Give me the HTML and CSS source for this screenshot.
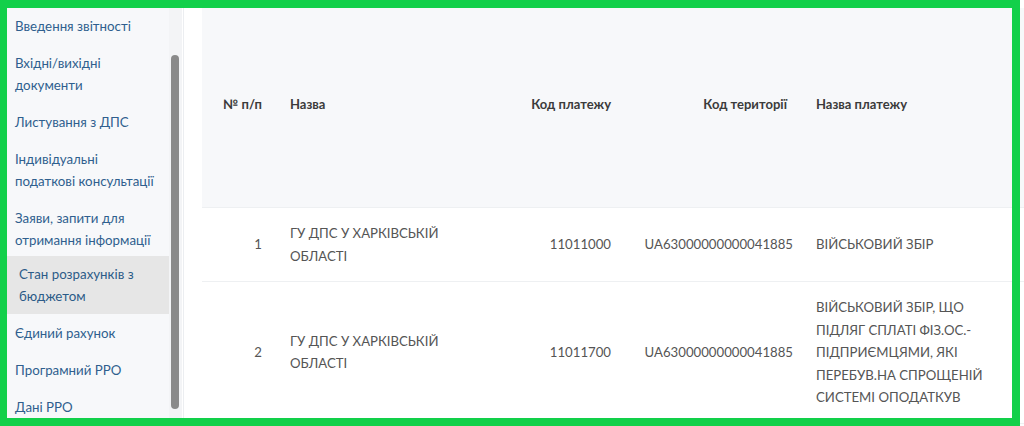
FILE: index.html
```html
<!DOCTYPE html>
<html>
  <head>
    <meta charset="utf-8">
    <title>Стан розрахунків з бюджетом</title>
    <link rel="stylesheet" href="styles.css">
  </head>
  <body>
    <div class="page">
      <aside class="sidebar">
        <nav class="menu">
          <a class="menu-item" href="#">Введення звітності</a>
          <a class="menu-item" href="#">Вхідні/вихідні документи</a>
          <a class="menu-item" href="#">Листування з ДПС</a>
          <a class="menu-item" href="#">Індивідуальні податкові консультації</a>
          <a class="menu-item" href="#">Заяви, запити для отримання інформації</a>
          <a class="menu-item active" href="#">Стан розрахунків з бюджетом</a>
          <a class="menu-item" href="#">Єдиний рахунок</a>
          <a class="menu-item" href="#">Програмний РРО</a>
          <a class="menu-item" href="#">Дані РРО</a>
        </nav>
        <div class="scroll-track">
          <div class="scroll-thumb"></div>
        </div>
      </aside>
      <main class="content">
        <table class="grid">
          <colgroup>
            <col class="c-num">
            <col class="c-name">
            <col class="c-code">
            <col class="c-terr">
            <col class="c-pay">
            <col>
          </colgroup>
          <thead>
            <tr>
              <th class="num">№ п/п</th>
              <th>Назва</th>
              <th class="num">Код платежу</th>
              <th class="num terr">Код території</th>
              <th class="pay">Назва платежу</th>
              <th></th>
            </tr>
          </thead>
          <tbody>
            <tr>
              <td class="num">1</td>
              <td>ГУ ДПС У ХАРКІВСЬКІЙ ОБЛАСТІ</td>
              <td class="num">11011000</td>
              <td class="num">UA63000000000041885</td>
              <td class="pay">ВІЙСЬКОВИЙ ЗБІР</td>
              <td></td>
            </tr>
            <tr>
              <td class="num">2</td>
              <td>ГУ ДПС У ХАРКІВСЬКІЙ ОБЛАСТІ</td>
              <td class="num">11011700</td>
              <td class="num">UA63000000000041885</td>
              <td class="pay">ВІЙСЬКОВИЙ ЗБІР, ЩО ПІДЛЯГ СПЛАТІ ФІЗ.ОС.-ПІДПРИЄМЦЯМИ, ЯКІ ПЕРЕБУВ.НА СПРОЩЕНІЙ СИСТЕМІ ОПОДАТКУВ</td>
              <td></td>
            </tr>
          </tbody>
        </table>
      </main>
    </div>
    <div class="frame"></div>
  </body>
</html>
```

FILE: styles.css
```css
html, body {
  margin: 0;
  height: 100%;
}
body {
  width: 1024px;
  height: 426px;
  overflow: hidden;
  background: #fff;
  font-family: Lato, "Noto Sans", sans-serif;
  font-size: 14px;
}
.page {
  display: flex;
  height: 426px;
}
.sidebar {
  display: flex;
  width: 183px;
  flex: none;
  border-right: 1px solid #eceef1;
}
.menu {
  display: flex;
  flex-direction: column;
  width: 169px;
  padding-top: 7px;
  background: #f7f8fa;
  overflow: hidden;
}
.menu-item {
  display: block;
  padding: 7.5px 8px 7.5px 15px;
  font-size: 13.3px;
  line-height: 22px;
  color: #2f5f8e;
  text-decoration: none;
}
.menu-item.active {
  margin-top: -2px;
  padding: 7px 8px 7px 19px;
  background: #e6e6e6;
  color: #2c5b88;
}
.scroll-track {
  width: 13px;
  padding-top: 55px;
  background: #f3f4f6;
}
.scroll-thumb {
  width: 8px;
  height: 354px;
  margin-left: 2px;
  border-radius: 4px;
  background: #8a8a8a;
}
.content {
  flex: 1;
  padding-left: 18px;
  padding-top: 8px;
  overflow: hidden;
}
.grid {
  width: 823px;
  table-layout: fixed;
  border-collapse: collapse;
}
.c-num { width: 74px; }
.c-name { width: 203px; }
.c-code { width: 146px; }
.c-terr { width: 182px; }
.c-pay { width: 198px; }
.grid th {
  height: 192px;
  padding: 0 14px 7px;
  background: #f7f8fa;
  border-bottom: 1px solid #eef0f2;
  color: #3b3b3b;
  font-size: 13px;
  font-weight: 700;
  text-align: left;
  vertical-align: middle;
}
.grid td {
  padding: 14px;
  font-size: 13.2px;
  line-height: 22.5px;
  border-bottom: 1px solid #eef0f2;
  color: #555;
  vertical-align: middle;
}
.grid .num {
  text-align: right;
}
.grid th.terr {
  padding-right: 20px;
}
.grid .pay {
  padding-left: 9px;
  padding-right: 9px;
}
.frame {
  position: absolute;
  top: 0;
  left: 0;
  width: 1020px;
  height: 426px;
  box-sizing: border-box;
  border: 8px solid #12d04a;
  border-left-width: 7px;
  pointer-events: none;
}
```
